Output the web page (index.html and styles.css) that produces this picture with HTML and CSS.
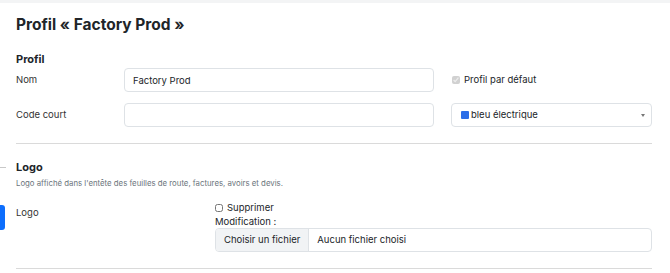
FILE: index.html
```html
<!DOCTYPE html>
<html lang="fr">
<head>
  <meta charset="UTF-8" />
  <meta name="viewport" content="width=device-width, initial-scale=1.0"/>
  <title>Profil Factory Prod</title>
  <link rel="stylesheet" href="styles.css">
</head>
<body>
  <div class="topbar"></div>

  <div class="page">
    <h1 class="page-title">Profil « Factory Prod »</h1>

    <section class="section">
      <h2>Profil</h2>

      <div class="row">
        <label class="row-label" for="nom">Nom</label>
        <input class="field" type="text" id="nom" value="Factory Prod" />
        <label class="check">
          <input type="checkbox" checked disabled />
          Profil par défaut
        </label>
      </div>

      <div class="row">
        <label class="row-label" for="code">Code court</label>
        <input class="field" type="text" id="code" />
        <div class="select">
          <span class="swatch"></span>
          <span class="select-text">bleu électrique</span>
          <span class="caret"></span>
        </div>
      </div>
    </section>

    <hr class="sep" />

    <section class="section logo-section">
      <span class="mark-line"></span>
      <h2>Logo</h2>
      <p class="help">Logo affiché dans l'entête des feuilles de route, factures, avoirs et devis.</p>

      <div class="row row-logo">
        <span class="mark-active"></span>
        <span class="row-label">Logo</span>
        <div class="logo-field">
          <label class="check">
            <input type="checkbox" />
            Supprimer
          </label>
          <div class="modif">Modification :</div>
          <div class="file">
            <span class="file-btn">Choisir un fichier</span>
            <span class="file-name">Aucun fichier choisi</span>
          </div>
        </div>
      </div>
    </section>

    <hr class="sep" />
  </div>
</body>
</html>
```

FILE: styles.css
```css
:root {
  --texte: #212529;
  --gris: #6c757d;
  --bord: #dee2e6;
  --bleu: #0d6efd;
}

body {
  margin: 0;
  font-family: Inter, "Noto Sans", sans-serif;
  font-size: 9.5px;
  line-height: 12px;
  color: var(--texte);
  background: #fff;
}

.topbar {
  height: 3px;
  background: #f3f4f5;
}

.page {
  padding: 0 18px 0 16px;
}

.page-title {
  font-size: 15.5px;
  font-weight: 700;
  margin: 12px 0 0;
  line-height: 20px;
}

.section {
  position: relative;
}

h2 {
  font-size: 11px;
  font-weight: 700;
  margin: 0;
  line-height: 14px;
}

.section > h2 {
  padding-top: 17px;
}

.row {
  display: grid;
  grid-template-columns: 91px 310px 1fr;
  column-gap: 17px;
  align-items: center;
  margin-top: 2px;
}

.row + .row {
  margin-top: 11px;
}

.row-label {
  color: #333;
}

.field {
  box-sizing: border-box;
  height: 24px;
  border: 1px solid var(--bord);
  border-radius: 4px;
  padding: 0 8px;
  font: inherit;
  color: var(--texte);
  outline: none;
}

.check {
  display: flex;
  align-items: center;
  gap: 4px;
}

.check input {
  margin: 0 0 0 1px;
  width: 8px;
  height: 8px;
}

.select {
  display: flex;
  align-items: center;
  box-sizing: border-box;
  height: 24px;
  border: 1px solid var(--bord);
  border-radius: 4px;
  padding: 0 6px 0 9px;
}

.swatch {
  width: 8px;
  height: 8px;
  border-radius: 1px;
  background: #2c6ee8;
  margin-right: 2px;
}

.select-text {
  flex: 1;
}

.caret {
  width: 0;
  height: 0;
  border-left: 2.5px solid transparent;
  border-right: 2.5px solid transparent;
  border-top: 3px solid #777;
}

.sep {
  border: none;
  border-top: 1px solid #dadada;
  margin: 16px 0 0;
}

.logo-section > h2 {
  padding-top: 16px;
}

.help {
  margin: 4px 0 0;
  font-size: 7.8px;
  line-height: 10px;
  color: var(--gris);
}

.mark-line {
  position: absolute;
  left: -16px;
  top: 23px;
  width: 6px;
  height: 1px;
  background: #c8c8c8;
}

.row-logo {
  grid-template-columns: 199px 1fr;
  column-gap: 0;
  align-items: start;
  margin-top: 14px;
}

.row-logo .row-label {
  padding-top: 5px;
}

.mark-active {
  position: absolute;
  left: -16px;
  width: 5px;
  height: 25px;
  margin-top: 3px;
  background: var(--bleu);
  border-radius: 0 3px 3px 0;
}

.logo-field .check input {
  margin-left: 0;
}

.modif {
  margin-top: 2px;
}

.file {
  display: flex;
  box-sizing: border-box;
  height: 24px;
  border: 1px solid var(--bord);
  border-radius: 4px;
  overflow: hidden;
}

.file-btn {
  display: flex;
  align-items: center;
  padding: 0 8px;
  background: #f1f3f5;
  border-right: 1px solid var(--bord);
}

.file-name {
  display: flex;
  align-items: center;
  padding: 0 8px;
}
```
